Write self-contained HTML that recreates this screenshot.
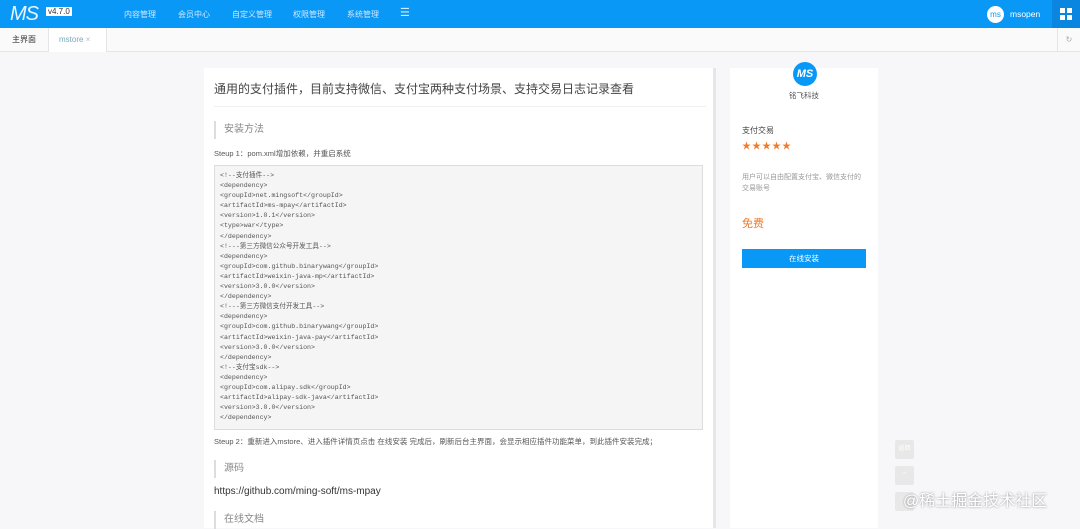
<!DOCTYPE html>
<html><head><meta charset="utf-8"><style>
*{margin:0;padding:0;box-sizing:border-box}
body{width:1080px;height:525px;overflow:hidden;background:#f7f7fa;font-family:"Liberation Sans","Noto Sans CJK SC",sans-serif;position:relative}
.hd{position:absolute;left:0;top:0;width:1080px;height:28px;background:#0a98f7}
.logo{position:absolute;left:10px;top:3px;color:#e8f6ff;font-style:italic;font-size:20px;letter-spacing:-1px}
.ver{position:absolute;left:46px;top:7px;background:#fff;color:#333;font-size:8px;padding:0 2px;line-height:9px}
.nav{position:absolute;top:9px;color:#cfe9ff;font-size:8px}
.user{position:absolute;left:987px;top:6px;width:17px;height:17px;border-radius:50%;background:#fff;color:#0a98f7;font-size:8px;text-align:center;line-height:17px}
.grid{position:absolute;left:1052px;top:0;width:28px;height:28px;background:#0a86e0}
.grid i{position:absolute;width:5px;height:5px;background:#fff}
.tabs{position:absolute;left:0;top:28px;width:1080px;height:24px;background:#fafafa;border-bottom:1px solid #e5e5e5;font-size:8px}
.main{position:absolute;left:204px;top:68px;width:512px;height:460px;background:#fff;border-right:3px solid #e6e6e6}
.side{position:absolute;left:730px;top:68px;width:148px;height:460px;background:#fff}
pre{position:absolute;left:10px;top:97px;width:489px;height:265px;background:#f5f5f5;border:1px solid #ddd;font-family:"Liberation Mono","Noto Sans CJK SC",monospace;font-size:6.6px;line-height:10.1px;color:#555;padding:5px 5px}
.h2{position:absolute;left:10px;border-left:2px solid #ddd;padding-left:8px;font-size:10px;color:#888;height:18px;line-height:18px}
.sm{position:absolute;left:10px;font-size:7.5px;color:#555}
.fb{position:absolute;left:895px;width:19px;height:19px;background:#e8e8e8;border-radius:2px;font-size:6px;color:#fff;text-align:center;line-height:19px}
</style></head><body>
<div class="hd">
<div class="logo">MS</div><div class="ver">v4.7.0</div>
<div class="nav" style="left:124px">内容管理</div>
<div class="nav" style="left:178px">会员中心</div>
<div class="nav" style="left:232px">自定义管理</div>
<div class="nav" style="left:293px">权限管理</div>
<div class="nav" style="left:347px">系统管理</div>
<div class="nav" style="left:400px;font-size:11px;top:6px">☰</div>
<div class="user">ms</div>
<div style="position:absolute;left:1010px;top:9px;color:#fff;font-size:8.5px">msopen</div>
<div class="grid"><i style="left:8px;top:8px"></i><i style="left:15px;top:8px"></i><i style="left:8px;top:15px"></i><i style="left:15px;top:15px"></i></div>
</div>
<div class="tabs">
<div style="position:absolute;left:0;top:0;width:49px;height:24px;border-right:1px solid #e5e5e5;line-height:24px;text-align:center;color:#333">主界面</div>
<div style="position:absolute;left:49px;top:0;width:58px;height:24px;border-right:1px solid #e5e5e5;line-height:24px;padding-left:10px;color:#7ab;background:#fff">mstore <span style="color:#bbb">×</span></div>
<div style="position:absolute;left:1057px;top:0;width:23px;height:24px;border-left:1px solid #e5e5e5;line-height:24px;text-align:center;color:#aaa;font-size:8px">↻</div>
</div>
<div class="main">
<div style="position:absolute;left:10px;top:12px;font-size:12px;color:#444">通用的支付插件，目前支持微信、支付宝两种支付场景、支持交易日志记录查看</div>
<div style="position:absolute;left:10px;top:38px;width:492px;border-top:1px solid #f0f0f0"></div>
<div class="h2" style="top:53px">安装方法</div>
<div class="sm" style="top:80px">Steup 1：pom.xml增加依赖，并重启系统</div>
<pre>&lt;!--支付插件--&gt;
&lt;dependency&gt;
&lt;groupId&gt;net.mingsoft&lt;/groupId&gt;
&lt;artifactId&gt;ms-mpay&lt;/artifactId&gt;
&lt;version&gt;1.0.1&lt;/version&gt;
&lt;type&gt;war&lt;/type&gt;
&lt;/dependency&gt;
&lt;!---第三方微信公众号开发工具--&gt;
&lt;dependency&gt;
&lt;groupId&gt;com.github.binarywang&lt;/groupId&gt;
&lt;artifactId&gt;weixin-java-mp&lt;/artifactId&gt;
&lt;version&gt;3.0.0&lt;/version&gt;
&lt;/dependency&gt;
&lt;!---第三方微信支付开发工具--&gt;
&lt;dependency&gt;
&lt;groupId&gt;com.github.binarywang&lt;/groupId&gt;
&lt;artifactId&gt;weixin-java-pay&lt;/artifactId&gt;
&lt;version&gt;3.0.0&lt;/version&gt;
&lt;/dependency&gt;
&lt;!--支付宝sdk--&gt;
&lt;dependency&gt;
&lt;groupId&gt;com.alipay.sdk&lt;/groupId&gt;
&lt;artifactId&gt;alipay-sdk-java&lt;/artifactId&gt;
&lt;version&gt;3.0.0&lt;/version&gt;
&lt;/dependency&gt;</pre>
<div class="sm" style="top:368px">Steup 2：重新进入mstore、进入插件详情页点击 在线安装 完成后，刷新后台主界面，会显示相应插件功能菜单，到此插件安装完成；</div>
<div class="h2" style="top:392px">源码</div>
<div style="position:absolute;left:10px;top:418px;font-size:10px;color:#333">https://github.com/ming-soft/ms-mpay</div>
<div class="h2" style="top:443px">在线文档</div>
</div>
<div class="side">
<div style="position:absolute;left:63px;top:-6px;width:24px;height:24px;border-radius:50%;background:#0a98f7;color:#fff;font-style:italic;font-weight:bold;font-size:11px;text-align:center;line-height:24px">MS</div>
<div style="position:absolute;left:0;width:148px;top:22px;text-align:center;font-size:7.5px;color:#555">铭飞科技</div>
<div style="position:absolute;left:12px;top:57px;font-size:8px;color:#444">支付交易</div>
<div style="position:absolute;left:12px;top:71px;font-size:9px;color:#f07a2a;letter-spacing:1px">★★★★★</div>
<div style="position:absolute;left:12px;top:104px;width:122px;font-size:7px;line-height:11px;color:#999">用户可以自由配置支付宝、微信支付的交易账号</div>
<div style="position:absolute;left:12px;top:147px;font-size:11px;color:#f07a2a">免费</div>
<div style="position:absolute;left:12px;top:181px;width:124px;height:19px;background:#0a98f7;color:#fff;font-size:7.5px;text-align:center;line-height:19px">在线安装</div>
</div>
<div class="fb" style="top:440px">返回</div>
<div class="fb" style="top:466px">^</div>
<div class="fb" style="top:492px"></div>
<div style="position:absolute;left:903px;top:487px;font-size:16px;color:#fff;text-shadow:0 0 2px #888">@稀土掘金技术社区</div>
</body></html>
